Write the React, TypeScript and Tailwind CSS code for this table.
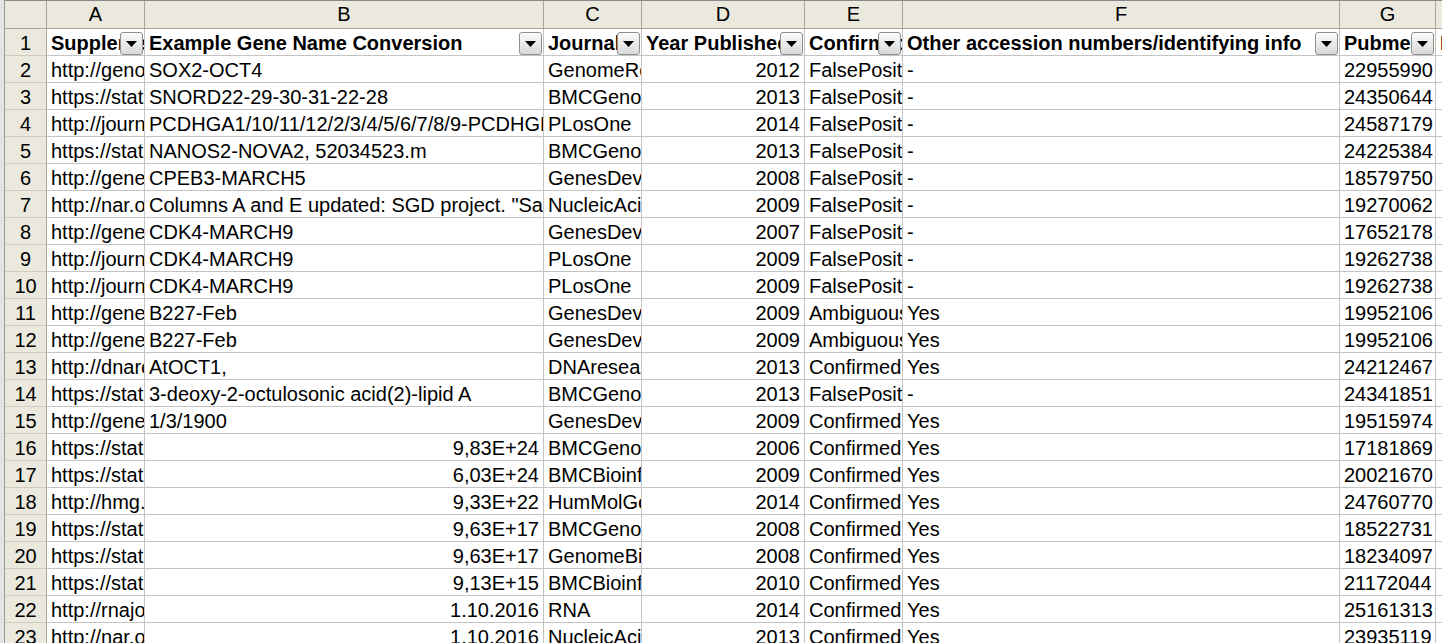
import React from 'react';

type Row = {
  a: string;
  b: string;
  bRight?: boolean;
  c: string;
  d: string;
  e: string;
  f: string;
  g: string;
};

const rows: Row[] = [
  { a: 'http://genome.cshlp.org/content/22/9/1680', b: 'SOX2-OCT4', c: 'GenomeResearch', d: '2012', e: 'FalsePositive', f: '-', g: '22955990' },
  { a: 'https://static-content.springer.com/esm', b: 'SNORD22-29-30-31-22-28', c: 'BMCGenomics', d: '2013', e: 'FalsePositive', f: '-', g: '24350644' },
  { a: 'http://journals.plos.org/plosone', b: 'PCDHGA1/10/11/12/2/3/4/5/6/7/8/9-PCDHGB1', c: 'PLosOne', d: '2014', e: 'FalsePositive', f: '-', g: '24587179' },
  { a: 'https://static-content.springer.com/esm', b: 'NANOS2-NOVA2, 52034523.m', c: 'BMCGenomics', d: '2013', e: 'FalsePositive', f: '-', g: '24225384' },
  { a: 'http://genesdev.cshlp.org/content', b: 'CPEB3-MARCH5', c: 'GenesDev', d: '2008', e: 'FalsePositive', f: '-', g: '18579750' },
  { a: 'http://nar.oxfordjournals.org/content', b: 'Columns A and E updated: SGD project. "Saccharomyces', c: 'NucleicAcidsResearch', d: '2009', e: 'FalsePositive', f: '-', g: '19270062' },
  { a: 'http://genesdev.cshlp.org/content', b: 'CDK4-MARCH9', c: 'GenesDev', d: '2007', e: 'FalsePositive', f: '-', g: '17652178' },
  { a: 'http://journals.plos.org/plosone', b: 'CDK4-MARCH9', c: 'PLosOne', d: '2009', e: 'FalsePositive', f: '-', g: '19262738' },
  { a: 'http://journals.plos.org/plosone', b: 'CDK4-MARCH9', c: 'PLosOne', d: '2009', e: 'FalsePositive', f: '-', g: '19262738' },
  { a: 'http://genesdev.cshlp.org/content', b: 'B227-Feb', c: 'GenesDev', d: '2009', e: 'Ambiguous', f: 'Yes', g: '19952106' },
  { a: 'http://genesdev.cshlp.org/content', b: 'B227-Feb', c: 'GenesDev', d: '2009', e: 'Ambiguous', f: 'Yes', g: '19952106' },
  { a: 'http://dnaresearch.oxfordjournals.org', b: 'AtOCT1,', c: 'DNAresearch', d: '2013', e: 'Confirmed', f: 'Yes', g: '24212467' },
  { a: 'https://static-content.springer.com/esm', b: '3-deoxy-2-octulosonic acid(2)-lipid A', c: 'BMCGenomics', d: '2013', e: 'FalsePositive', f: '-', g: '24341851' },
  { a: 'http://genesdev.cshlp.org/content', b: '1/3/1900', c: 'GenesDev', d: '2009', e: 'Confirmed', f: 'Yes', g: '19515974' },
  { a: 'https://static-content.springer.com/esm', b: '9,83E+24', bRight: true, c: 'BMCGenomics', d: '2006', e: 'Confirmed', f: 'Yes', g: '17181869' },
  { a: 'https://static-content.springer.com/esm', b: '6,03E+24', bRight: true, c: 'BMCBioinformatics', d: '2009', e: 'Confirmed', f: 'Yes', g: '20021670' },
  { a: 'http://hmg.oxfordjournals.org/content', b: '9,33E+22', bRight: true, c: 'HumMolGenet', d: '2014', e: 'Confirmed', f: 'Yes', g: '24760770' },
  { a: 'https://static-content.springer.com/esm', b: '9,63E+17', bRight: true, c: 'BMCGenomics', d: '2008', e: 'Confirmed', f: 'Yes', g: '18522731' },
  { a: 'https://static-content.springer.com/esm', b: '9,63E+17', bRight: true, c: 'GenomeBiology', d: '2008', e: 'Confirmed', f: 'Yes', g: '18234097' },
  { a: 'https://static-content.springer.com/esm', b: '9,13E+15', bRight: true, c: 'BMCBioinformatics', d: '2010', e: 'Confirmed', f: 'Yes', g: '21172044' },
  { a: 'http://rnajournal.cshlp.org/content', b: '1.10.2016', bRight: true, c: 'RNA', d: '2014', e: 'Confirmed', f: 'Yes', g: '25161313' },
  { a: 'http://nar.oxfordjournals.org/content', b: '1.10.2016', bRight: true, c: 'NucleicAcidsResearch', d: '2013', e: 'Confirmed', f: 'Yes', g: '23935119' },
];

const headers = [
  'Supplementary file',
  'Example Gene Name Conversion',
  'Journal',
  'Year Published',
  'Confirmed',
  'Other accession numbers/identifying info',
  'Pubmed ID',
  'Date',
];

const GRID =
  'grid grid-cols-[42px_98px_399px_98px_163px_98px_437px_96px_120px]';

function FilterButton() {
  return (
    <div className="absolute right-[1px] top-[3px] flex h-[23px] w-[23px] items-center justify-center rounded-[3px] border border-[#8f8f8f] bg-gradient-to-b from-[#fbfbfb] to-[#d9d9d9]">
      <svg width="11" height="6" viewBox="0 0 11 6">
        <polygon points="0,0 11,0 5.5,6" fill="#000" />
      </svg>
    </div>
  );
}

function Cell({ children, right }: { children?: React.ReactNode; right?: boolean }) {
  return (
    <div
      className={`h-[27px] overflow-hidden whitespace-nowrap border-b border-r border-[#c4c4c4] bg-white px-[4px] pt-[1px] leading-[27px] ${
        right ? 'text-right' : 'text-left'
      }`}
    >
      {children}
    </div>
  );
}

function RowHead({ n }: { n: number }) {
  return (
    <div className="h-[27px] border-b border-r border-b-[#cfccbf] border-r-[#a9a698] bg-[#ebe9dd] pt-[1px] text-center leading-[27px]">
      {n}
    </div>
  );
}

export default function App() {
  return (
    <div
      className="flex h-[643px] w-[1442px] overflow-hidden bg-white text-[20px] text-black"
      style={{ fontFamily: '"Liberation Sans", Arial, sans-serif' }}
    >
      {/* left window edge */}
      <div className="w-[5px] shrink-0 border-r border-[#9a9a9a] bg-[#e4e4e4]" />

      <div className="flex-1 overflow-hidden">
        {/* column letters */}
        <div className={`${GRID} border-t border-[#8a8a8a]`}>
          <div className="h-[28px] border-b border-r border-[#a9a698] bg-[#ebe9dd]" />
          {['A', 'B', 'C', 'D', 'E', 'F', 'G', ''].map((l, i) => (
            <div
              key={i}
              className="h-[28px] border-b border-r border-[#a9a698] bg-[#ebe9dd] text-center leading-[27px]"
            >
              {l}
            </div>
          ))}
        </div>

        {/* row 1: filter headers */}
        <div className={GRID}>
          <RowHead n={1} />
          {headers.map((h, i) => (
            <div
              key={i}
              className="relative h-[27px] overflow-hidden whitespace-nowrap border-b border-r border-[#c4c4c4] bg-white px-[4px] pt-[1px] font-bold leading-[27px]"
            >
              {h}
              {i < 7 && <FilterButton />}
            </div>
          ))}
        </div>

        {rows.map((r, i) => (
          <div key={i} className={GRID}>
            <RowHead n={i + 2} />
            <Cell>{r.a}</Cell>
            <Cell right={r.bRight}>{r.b}</Cell>
            <Cell>{r.c}</Cell>
            <Cell right>{r.d}</Cell>
            <Cell>{r.e}</Cell>
            <Cell>{r.f}</Cell>
            <Cell right>{r.g}</Cell>
            <Cell />
          </div>
        ))}
      </div>
    </div>
  );
}
